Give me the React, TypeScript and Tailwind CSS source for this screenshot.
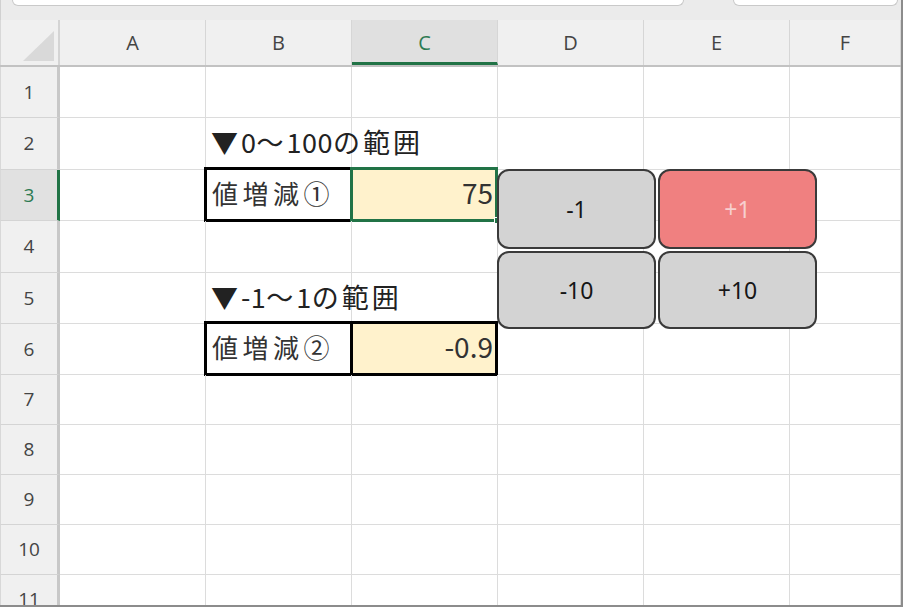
import React from "react";

const cols = ["A", "B", "C", "D", "E", "F"];
const rowH = [
  "h-[51px]",
  "h-[52px]",
  "h-[51px]",
  "h-[52px]",
  "h-[51px]",
  "h-[51px]",
  "h-[50px]",
  "h-[50px]",
  "h-[50px]",
  "h-[50px]",
  "h-[50px]",
];

const jp = { fontFamily: '"Noto Sans CJK JP", "Noto Sans", sans-serif' } as React.CSSProperties;

function CellContent({ r, c }: { r: number; c: number }) {
  if (c === 1 && r === 2) {
    return (
      <div className="absolute inset-0 flex items-center pl-[5px] pb-[2px] whitespace-nowrap text-[27px] tracking-[3px] text-[#222]" style={jp}>
        ▼<span className="tracking-[0.5px]">0</span>～<span className="tracking-[0.5px]">100</span>の範囲
      </div>
    );
  }
  if (c === 1 && r === 5) {
    return (
      <div className="absolute inset-0 flex items-center pl-[5px] pb-[2px] whitespace-nowrap text-[27px] tracking-[3px] text-[#222]" style={jp}>
        ▼<span className="tracking-[0.5px]">-1</span>～<span className="tracking-[0.5px]">1</span>の範囲
      </div>
    );
  }
  if (c === 1 && (r === 3 || r === 6)) {
    return (
      <>
        <div className="absolute inset-0 flex items-center pl-[6px] pb-[6px] whitespace-nowrap text-[26px] tracking-[4.5px] text-[#333]" style={jp}>
          {r === 3 ? "値増減①" : "値増減②"}
        </div>
        <div className="pointer-events-none absolute -top-[3px] -left-[2px] -right-[2px] -bottom-[2px] border-[3px] border-black" />
      </>
    );
  }
  if (c === 2 && (r === 3 || r === 6)) {
    return (
      <>
        <div className="absolute inset-0 bg-[#fff2cc]" />
        <div className="absolute inset-0 flex items-center justify-end pr-[4px] pb-[6px] text-[28px] text-[#333]" style={jp}>
          {r === 3 ? "75" : "-0.9"}
        </div>
        {r === 6 && (
          <div className="pointer-events-none absolute -top-[3px] -left-[2px] -right-[1px] -bottom-[2px] border-[3px] border-black" />
        )}
        {r === 3 && (
          <>
            <div className="pointer-events-none absolute -top-[3px] -left-[2px] -right-[1px] -bottom-[2px] border-[3px] border-[#217346]" />
            <div className="absolute -right-[4px] -bottom-[4px] w-[7px] h-[7px] bg-[#217346] border border-white" />
          </>
        )}
      </>
    );
  }
  return null;
}

function Btn({ label, red }: { label: string; red?: boolean }) {
  return (
    <div
      className={
        "flex items-center justify-center rounded-[12px] border-2 border-[#3a3a3a] text-[23px] " +
        (red ? "bg-[#f08080] text-[#f7cfcf]" : "bg-[#d3d3d3] text-[#161616]")
      }
      style={{ fontFamily: '"Noto Sans", "Open Sans", sans-serif' }}
    >
      {label}
    </div>
  );
}

export default function App() {
  return (
    <div className="relative w-[903px] h-[607px] overflow-hidden bg-white border-r-2 border-b-2 border-[#8c8c8c] select-none">
      {/* top strip */}
      <div className="h-[20px] bg-[#ebebeb] flex items-start border-l border-[#d0d0d0]">
        <div className="ml-[11px] w-[672px] h-[6px] bg-white border border-t-0 border-[#c9c9c9] rounded-b-[6px]" />
        <div className="ml-[49px] w-[165px] h-[6px] bg-white border border-t-0 border-[#c9c9c9] rounded-b-[6px]" />
      </div>

      {/* column header */}
      <div className="flex h-[47px] bg-[#f0f0f0] border-b-2 border-[#c2c2c2]" style={{ fontFamily: '"Open Sans", "Noto Sans", sans-serif' }}>
        <div className="w-[60px] shrink-0 relative border-r-2 border-[#d4d4d4] border-l border-l-[#d8d8d8]">
          <svg className="absolute left-[20px] top-[10px]" width="34" height="32" viewBox="0 0 34 32">
            <polygon points="2,31 33,31 33,1" fill="#d9d9d9" />
          </svg>
        </div>
        {cols.map((c, i) => (
          <div
            key={c}
            className={
              (i < 5 ? "w-[146px] shrink-0 " : "flex-1 ") +
              "flex items-center justify-center text-[20px] border-r border-[#d6d6d6] " +
              (c === "C"
                ? "bg-[#e0e0e0] text-[#2d7a52] border-b-[3px] border-b-[#217346] pt-[3px]"
                : "text-[#444]")
            }
          >
            {c}
          </div>
        ))}
      </div>

      {/* rows */}
      {rowH.map((h, ri) => {
        const r = ri + 1;
        return (
          <div key={r} className={"flex " + h}>
            <div
              className={
                "w-[60px] shrink-0 flex items-center justify-center text-[19px] border-b border-[#d4d4d4] border-l border-l-[#d8d8d8] " +
                (r === 3
                  ? "bg-[#e1e1e1] text-[#2d7a52] border-r-[3px] border-r-[#217346]"
                  : "bg-[#f0f0f0] text-[#444] border-r-[3px] border-r-[#c8c8c8]")
              }
              style={{ fontFamily: '"Open Sans", "Noto Sans", sans-serif' }}
            >
              {r}
            </div>
            {cols.map((c, ci) => (
              <div
                key={c}
                className={
                  (ci < 5 ? "w-[146px] shrink-0 " : "flex-1 ") +
                  "relative border-r border-b border-[#dcdcdc]"
                }
              >
                <CellContent r={r} c={ci} />
              </div>
            ))}
          </div>
        );
      })}

      {/* floating shape buttons */}
      <div className="absolute left-[497px] top-[169px] grid grid-cols-[159px_159px] grid-rows-[80px_78px] gap-[2px]">
        <Btn label="-1" />
        <Btn label="+1" red />
        <Btn label="-10" />
        <Btn label="+10" />
      </div>
    </div>
  );
}
